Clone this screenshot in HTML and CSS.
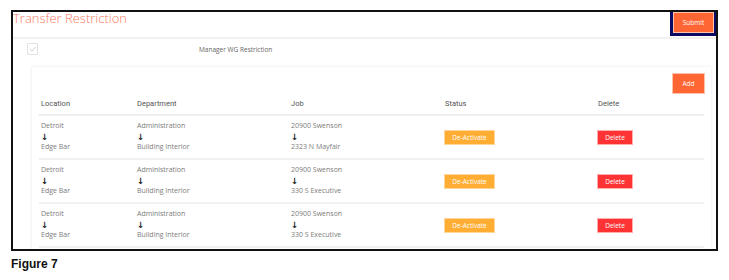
FILE: index.html
```html
<!DOCTYPE html>
<html lang="en">

<head>
    <meta charset="utf-8">
    <title>Transfer Restriction</title>
    <link rel="stylesheet" href="styles.css">
</head>

<body>
    <div class="panel">
        <!--Top bar-->
        <div class="panel-head">
            <h1>Transfer Restriction</h1>
            <div class="highlight">
                <button class="btn btn-orange btn-submit">Submit</button>
            </div>
        </div>

        <div class="check-row">
            <span class="checkbox">
                <svg width="8" height="8" viewBox="0 0 8 8"><path d="M1.2 4.2 L3 6 L6.8 2" fill="none" stroke="#c8c8c8" stroke-width="0.9"/></svg>
            </span>
            <span class="check-label">Manager WG Restriction</span>
        </div>

        <!--Card with restrictions-->
        <div class="card">
            <div class="card-top">
                <button class="btn btn-orange btn-add">Add</button>
            </div>

            <div class="grid head">
                <span>Location</span>
                <span>Department</span>
                <span>Job</span>
                <span>Status</span>
                <span>Delete</span>
            </div>

            <div class="grid row">
                <div class="stack"><span>Detroit</span><span class="arrow">&#8595;</span><span>Edge Bar</span></div>
                <div class="stack"><span>Administration</span><span class="arrow">&#8595;</span><span>Building Interior</span></div>
                <div class="stack"><span>20900 Swenson</span><span class="arrow">&#8595;</span><span>2323 N Mayfair</span></div>
                <div><button class="btn btn-status">De-Activate</button></div>
                <div><button class="btn btn-delete">Delete</button></div>
            </div>

            <div class="grid row">
                <div class="stack"><span>Detroit</span><span class="arrow">&#8595;</span><span>Edge Bar</span></div>
                <div class="stack"><span>Administration</span><span class="arrow">&#8595;</span><span>Building Interior</span></div>
                <div class="stack"><span>20900 Swenson</span><span class="arrow">&#8595;</span><span>330 S Executive</span></div>
                <div><button class="btn btn-status">De-Activate</button></div>
                <div><button class="btn btn-delete">Delete</button></div>
            </div>

            <div class="grid row">
                <div class="stack"><span>Detroit</span><span class="arrow">&#8595;</span><span>Edge Bar</span></div>
                <div class="stack"><span>Administration</span><span class="arrow">&#8595;</span><span>Building Interior</span></div>
                <div class="stack"><span>20900 Swenson</span><span class="arrow">&#8595;</span><span>330 S Executive</span></div>
                <div><button class="btn btn-status">De-Activate</button></div>
                <div><button class="btn btn-delete">Delete</button></div>
            </div>
        </div>
    </div>

    <p class="caption">Figure 7</p>
</body>

</html>
```

FILE: styles.css
```css
body {
    margin: 0;
    background-color: white;
    font-family: "Open Sans", sans-serif;
    -webkit-font-smoothing: antialiased;
}

.panel {
    position: relative;
    margin: 10px 0 0 11px;
    width: 703px;
    height: 237px;
    border: 2px solid #111;
    overflow: hidden;
}

.panel-head {
    height: 25px;
    border-bottom: 2px solid #f1f1f1;
}

h1 {
    margin: 0;
    font-family: "Open Sans", sans-serif;
    font-weight: 300;
    font-size: 13px;
    line-height: 13px;
    color: #fa7a5f;
}

/* navy box round the submit button */
.highlight {
    position: absolute;
    top: -3px;
    right: -1px;
    border: 3px solid #0b0b66;
    padding: 1px;
}

.btn {
    display: block;
    border: none;
    padding: 0;
    color: white;
    font-family: "Open Sans", sans-serif;
    font-size: 6.5px;
    cursor: pointer;
}

.btn-orange {
    background-color: #ff6633;
    box-shadow: 0 0 0 1px #ffc2a8;
}

.btn-submit {
    width: 39px;
    height: 19px;
}

.check-row {
    display: flex;
    align-items: center;
    height: 20px;
    padding-left: 14px;
}

.checkbox {
    display: flex;
    align-items: center;
    justify-content: center;
    width: 9px;
    height: 10px;
    border: 1px solid #e2e2e2;
    border-radius: 1px;
}

.check-label {
    margin-left: 161px;
    font-size: 6.5px;
    color: #666;
}

.card {
    margin: 8px 5px 0 19px;
    padding: 7px 7px 0 7px;
    background-color: white;
    box-shadow: 0 0 3px rgba(0, 0, 0, 0.1);
    height: 200px;
}

.card-top {
    display: flex;
    justify-content: flex-end;
}

.btn-add {
    width: 31px;
    height: 19px;
}

.grid {
    display: grid;
    grid-template-columns: 96px 154px 154px 153px 1fr;
    align-items: center;
}

.grid > * {
    padding-left: 2px;
}

.head {
    height: 21px;
    border-bottom: 2px solid #eeeeee;
    font-family: Roboto, sans-serif;
    font-size: 7.5px;
    color: #555;
}

.row {
    height: 42px;
    border-bottom: 2px solid #f1f1f1;
    font-size: 7px;
    color: #7c7c7c;
}

.stack {
    display: flex;
    flex-direction: column;
    line-height: 10.5px;
}

.arrow {
    font-family: "DejaVu Sans", sans-serif;
    font-weight: bold;
    font-size: 8.5px;
    color: #222;
}

.btn-status {
    width: 49px;
    height: 13px;
    background-color: #ffad33;
    box-shadow: 0 0 0 1px #ffd599;
}

.btn-delete {
    width: 34px;
    height: 13px;
    background-color: #ff3333;
    box-shadow: 0 0 0 1px #ffadad;
}

.caption {
    margin: 6px 0 0 11px;
    font-family: "Liberation Sans", sans-serif;
    font-weight: bold;
    font-size: 12px;
    color: #111;
}
```
